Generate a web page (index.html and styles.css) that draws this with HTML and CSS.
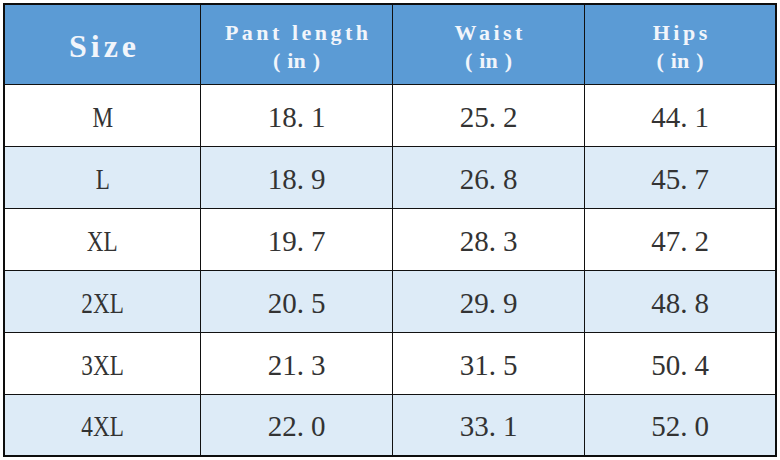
FILE: index.html
```html
<!DOCTYPE html>
<html>
<head>
<meta charset="utf-8">
<link rel="stylesheet" href="styles.css">
</head>
<body>
<div class="chart">
  <div class="cell head big">Size</div>
  <div class="cell head"><span class="l1">Pant length</span><span class="l2"><span class="p">(</span>in<span class="p">)</span></span></div>
  <div class="cell head"><span class="l1">Waist</span><span class="l2"><span class="p">(</span>in<span class="p">)</span></span></div>
  <div class="cell head last-col"><span class="l1">Hips</span><span class="l2"><span class="p">(</span>in<span class="p">)</span></span></div>

  <div class="cell"><span class="sz">M</span></div>
  <div class="cell">18<span class="dot">.</span>1</div>
  <div class="cell">25<span class="dot">.</span>2</div>
  <div class="cell last-col">44<span class="dot">.</span>1</div>

  <div class="cell alt"><span class="sz">L</span></div>
  <div class="cell alt">18<span class="dot">.</span>9</div>
  <div class="cell alt">26<span class="dot">.</span>8</div>
  <div class="cell alt last-col">45<span class="dot">.</span>7</div>

  <div class="cell"><span class="sz">XL</span></div>
  <div class="cell">19<span class="dot">.</span>7</div>
  <div class="cell">28<span class="dot">.</span>3</div>
  <div class="cell last-col">47<span class="dot">.</span>2</div>

  <div class="cell alt"><span class="sz">2XL</span></div>
  <div class="cell alt">20<span class="dot">.</span>5</div>
  <div class="cell alt">29<span class="dot">.</span>9</div>
  <div class="cell alt last-col">48<span class="dot">.</span>8</div>

  <div class="cell"><span class="sz">3XL</span></div>
  <div class="cell">21<span class="dot">.</span>3</div>
  <div class="cell">31<span class="dot">.</span>5</div>
  <div class="cell last-col">50<span class="dot">.</span>4</div>

  <div class="cell alt last-row"><span class="sz">4XL</span></div>
  <div class="cell alt last-row">22<span class="dot">.</span>0</div>
  <div class="cell alt last-row">33<span class="dot">.</span>1</div>
  <div class="cell alt last-row last-col">52<span class="dot">.</span>0</div>
</div>
</body>
</html>
```
FILE: styles.css
```css
html, body {
  margin: 0;
  padding: 0;
  background: #ffffff;
}
body {
  padding: 3px 0 0 3px;
}
.chart {
  display: grid;
  grid-template-columns: 196px 192px 192px 190px;
  grid-template-rows: 80px repeat(5, 62px) 60px;
  border: 2px solid #0d0d0d;
  width: 770px;
  font-family: "Liberation Serif", "Times New Roman", serif;
}
.cell {
  box-sizing: border-box;
  border-right: 1px solid #111;
  border-bottom: 1px solid #111;
  display: flex;
  align-items: center;
  justify-content: center;
  font-size: 29px;
  color: #333333;
  background: #ffffff;
  padding-top: 3px;
}
.cell.alt {
  background: #ddebf7;
}
.last-col {
  border-right: none;
}
.last-row {
  border-bottom: none;
}
.dot {
  letter-spacing: 7px;
}
.sz {
  display: inline-block;
  transform: scaleX(0.8);
}
.head {
  background: #5b9bd5;
  color: #f1f5fb;
  font-weight: bold;
  flex-direction: column;
  font-size: 22px;
  padding-top: 5px;
}
.head .l1 {
  letter-spacing: 3.5px;
  line-height: 28px;
  margin-right: -3.5px;
}
.head .l2 {
  line-height: 28px;
}
.head .p {
  margin: 0 7px;
}
.head.big {
  font-size: 32px;
  letter-spacing: 4px;
  padding-top: 4px;
  text-indent: 4px;
}
```
